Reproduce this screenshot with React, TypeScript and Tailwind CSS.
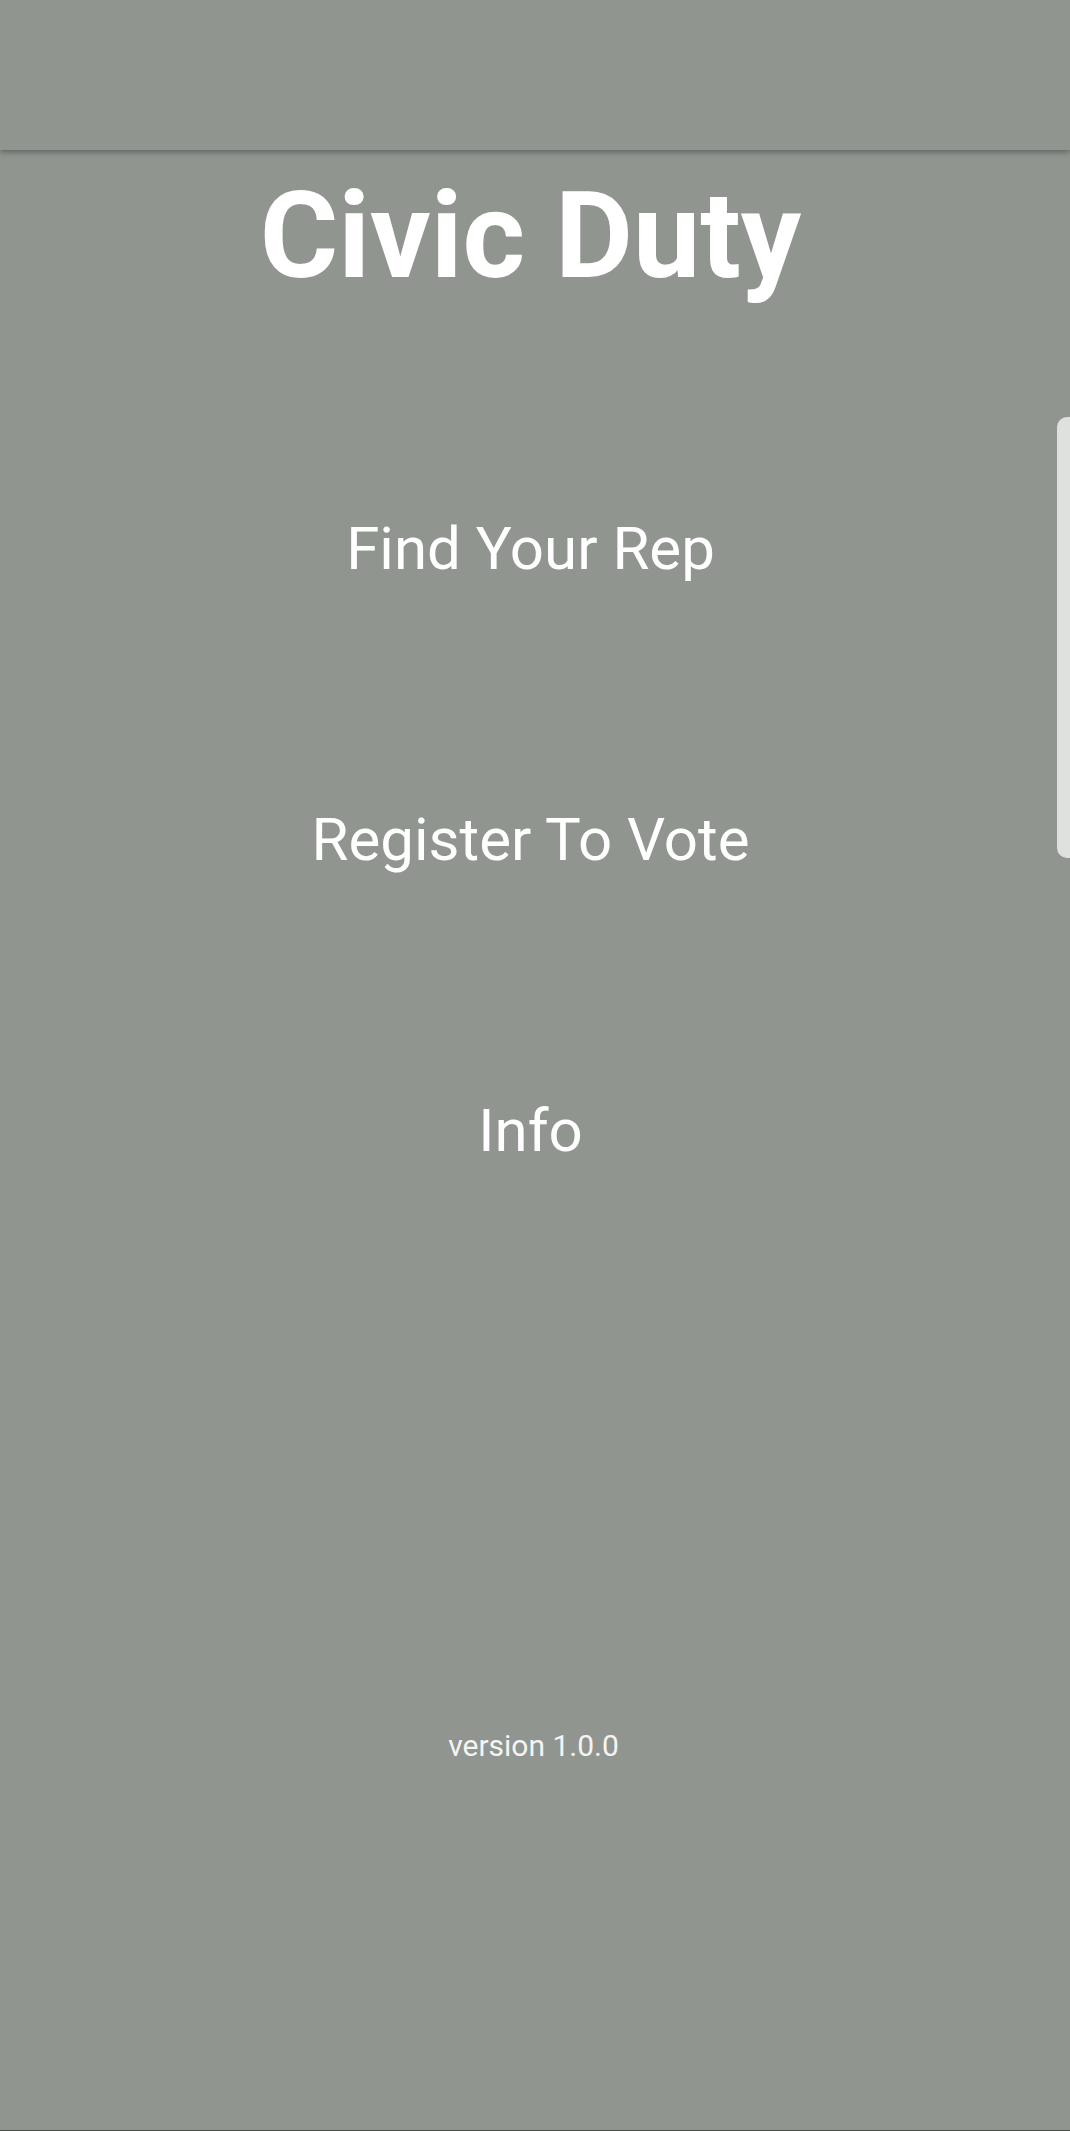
import React from "react";

export default function App() {
  const font = { fontFamily: "Roboto, 'Liberation Sans', sans-serif" };
  return (
    <div
      className="relative h-[2131px] w-full overflow-hidden bg-[#909590] border-b border-[#4b504b] text-white"
      style={font}
    >
      <header className="relative z-10 h-[150px] w-full bg-[#909590] shadow-[0_2px_6px_rgba(0,0,0,0.35)]" />
      <div className="flex flex-col items-center pr-[9px]">
        <h1 className="mt-[26px] text-[120px] font-bold leading-none">Civic Duty</h1>
        <button className="mt-[223px] text-[60px] leading-none font-normal text-white">Find Your Rep</button>
        <button className="mt-[231px] text-[60px] leading-none font-normal text-white">Register To Vote</button>
        <button className="mt-[231px] text-[60px] leading-none font-normal text-white">Info</button>
        <p className="mt-[570px] ml-[6px] text-[30px] leading-none text-[#f4f4f4]">version 1.0.0</p>
      </div>
      <div className="absolute right-0 top-[417px] h-[441px] w-[13px] rounded-l-[10px] bg-[#dfe1df]" />
    </div>
  );
}
